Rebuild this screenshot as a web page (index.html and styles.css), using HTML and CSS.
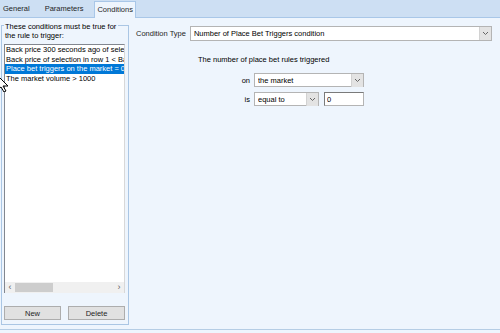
FILE: index.html
```html
<!DOCTYPE html>
<html lang="en">
<head>
    <meta charset="UTF-8">
    <title>Rule Conditions</title>
    <link rel="stylesheet" href="styles.css">
</head>
<body>
    <div class="window">
        <div class="tabs">
            <div class="tab">General</div>
            <div class="tab">Parameters</div>
            <div class="tab active">Conditions</div>
        </div>

        <div class="page">
            <div class="left">
                <div class="groupbox">
                    <div class="caption">These conditions must be true for<br>the rule to trigger:</div>
                    <div class="listbox">
                        <div class="items">
                            <div class="item">Back price 300 seconds ago of selec</div>
                            <div class="item">Back price of selection in row 1 &lt; Ba</div>
                            <div class="item selected">Place bet triggers on the market = 0</div>
                            <div class="item">The market volume &gt; 1000</div>
                        </div>
                        <div class="hscroll">
                            <span class="arrow">&lsaquo;</span>
                            <div class="track"><div class="thumb"></div></div>
                            <span class="arrow">&rsaquo;</span>
                        </div>
                    </div>
                    <div class="buttons">
                        <button class="btn">New</button>
                        <button class="btn">Delete</button>
                    </div>
                </div>
            </div>

            <div class="right">
                <div class="type-row">
                    <span class="label">Condition Type</span>
                    <div class="combo wide">
                        <span class="value">Number of Place Bet Triggers condition</span>
                        <span class="drop"><svg width="7" height="5" viewBox="0 0 7 5"><path d="M1 1 L3.5 3.5 L6 1" fill="none" stroke="#666" stroke-width="1"/></svg></span>
                    </div>
                </div>

                <div class="params">
                    <div class="heading">The number of place bet rules triggered</div>
                    <div class="row">
                        <span class="small-label">on</span>
                        <div class="combo market">
                            <span class="value">the market</span>
                            <span class="drop"><svg width="7" height="5" viewBox="0 0 7 5"><path d="M1 1 L3.5 3.5 L6 1" fill="none" stroke="#666" stroke-width="1"/></svg></span>
                        </div>
                    </div>
                    <div class="row">
                        <span class="small-label">is</span>
                        <div class="combo op">
                            <span class="value">equal to</span>
                            <span class="drop"><svg width="7" height="5" viewBox="0 0 7 5"><path d="M1 1 L3.5 3.5 L6 1" fill="none" stroke="#666" stroke-width="1"/></svg></span>
                        </div>
                        <input class="textbox" type="text" value="0">
                    </div>
                </div>
            </div>
        </div>

        <div class="footer">
            <div class="fbtn"></div>
            <div class="fbtn"></div>
        </div>

        <svg class="cursor" width="10" height="18" viewBox="0 0 10 18">
            <path d="M-3 1 L8 12 L3 12 L6 17 L4 18 L1 13 L-3 16 Z" fill="#fff" stroke="#000" stroke-width="1"/>
        </svg>
    </div>
</body>
</html>
```

FILE: styles.css
```css
* {
    margin: 0;
    padding: 0;
    box-sizing: border-box;
}

body {
    width: 500px;
    height: 333px;
    overflow: hidden;
    background: #eef5fd;
    font-family: 'Liberation Sans', Arial, sans-serif;
    font-size: 7.5px;
    color: #000;
}

.window {
    position: relative;
    width: 500px;
    height: 333px;
}

/* tab strip */
.tabs {
    height: 18px;
    display: flex;
    align-items: flex-end;
    background: #cddff3;
    border-bottom: 1px solid #a9c7e8;
}

.tab {
    height: 16px;
    line-height: 15px;
    padding: 0 3px;
    margin-right: 9px;
    color: #1e1e1e;
}

.tab.active {
    background: #eef5fd;
    border: 1px solid #a9c7e8;
    border-bottom: none;
    height: 17px;
    margin-bottom: -1px;
    margin-left: -1px;
    padding: 0 2px;
}

.page {
    display: flex;
    height: 311px;
}

/* left side */
.left {
    width: 131px;
    padding: 7px 2px 0 1px;
}

.groupbox {
    height: 300px;
    border: 1px solid #aac6e4;
    display: flex;
    flex-direction: column;
}

.caption {
    align-self: flex-start;
    margin: -4px 0 0 2px;
    padding: 0 2px 0 1px;
    background: #eef5fd;
    line-height: 9px;
}

.listbox {
    margin: 4px 3px 0 2px;
    height: 249px;
    background: #fff;
    border: 1px solid #828790;
    border-right-color: #d8d8d8;
    border-bottom: none;
    display: flex;
    flex-direction: column;
    overflow: hidden;
}

.items {
    flex: 1;
}

.item {
    height: 9.5px;
    line-height: 9.5px;
    padding-left: 1px;
    white-space: nowrap;
    overflow: hidden;
}

.item.selected {
    background: #0078d7;
    color: #fff;
}

.hscroll {
    height: 11px;
    background: #f0f0f0;
    display: flex;
    align-items: center;
}

.arrow {
    width: 10px;
    text-align: center;
    font-size: 9px;
    line-height: 9px;
    color: #606060;
}

.track {
    flex: 1;
    height: 9px;
    display: flex;
}

.thumb {
    width: 38px;
    background: #cdcdcd;
}

.buttons {
    display: flex;
    gap: 7px;
    padding: 13px 3px 0 2px;
}

.btn {
    width: 57px;
    height: 14px;
    background: #e1e1e1;
    border: 1px solid #adadad;
    font-family: 'Liberation Sans', Arial, sans-serif;
    font-size: 7.5px;
    color: #1e1e1e;
}

/* right side */
.right {
    flex: 1;
    padding: 8px 6px 0 5px;
}

.type-row {
    display: flex;
    align-items: center;
    gap: 4px;
}

.label {
    color: #1e1e1e;
}

.combo {
    height: 15px;
    background: #fff;
    border: 1px solid #b4b4b4;
    display: flex;
    align-items: center;
    padding-left: 3px;
}

.combo .value {
    flex: 1;
    white-space: nowrap;
    overflow: hidden;
}

.drop {
    width: 12px;
    height: 13px;
    background: #e3e3e3;
    border-left: 1px solid #d2d2d2;
    display: flex;
    align-items: center;
    justify-content: center;
}

.combo.wide {
    width: 302px;
}

.params {
    padding: 14px 0 0 62px;
}

.heading {
    margin-bottom: 9px;
}

.row {
    display: flex;
    align-items: center;
    margin-bottom: 5px;
}

.small-label {
    width: 56px;
    text-align: right;
    padding-right: 4px;
}

.combo.market {
    width: 110px;
    height: 14px;
}

.combo.op {
    width: 65px;
    height: 14px;
}

.textbox {
    width: 40px;
    height: 14px;
    margin-left: 5px;
    border: 1px solid #b4b4b4;
    border-top-color: #7a7a7a;
    border-left-color: #7a7a7a;
    padding-left: 2px;
    font-family: 'Liberation Sans', Arial, sans-serif;
    font-size: 7.5px;
    outline: none;
}

/* bottom buttons, cut off by the window edge */
.footer {
    height: 4px;
    border-top: 1px solid #b5cde5;
    display: flex;
    justify-content: flex-end;
    gap: 5px;
    padding: 3px 4px 0 0;
}

.fbtn {
    width: 51px;
    height: 6px;
    border: 1px solid #adadad;
    border-bottom: none;
    background: #e1e1e1;
}

.cursor {
    position: absolute;
    left: 0;
    top: 74px;
}
```
